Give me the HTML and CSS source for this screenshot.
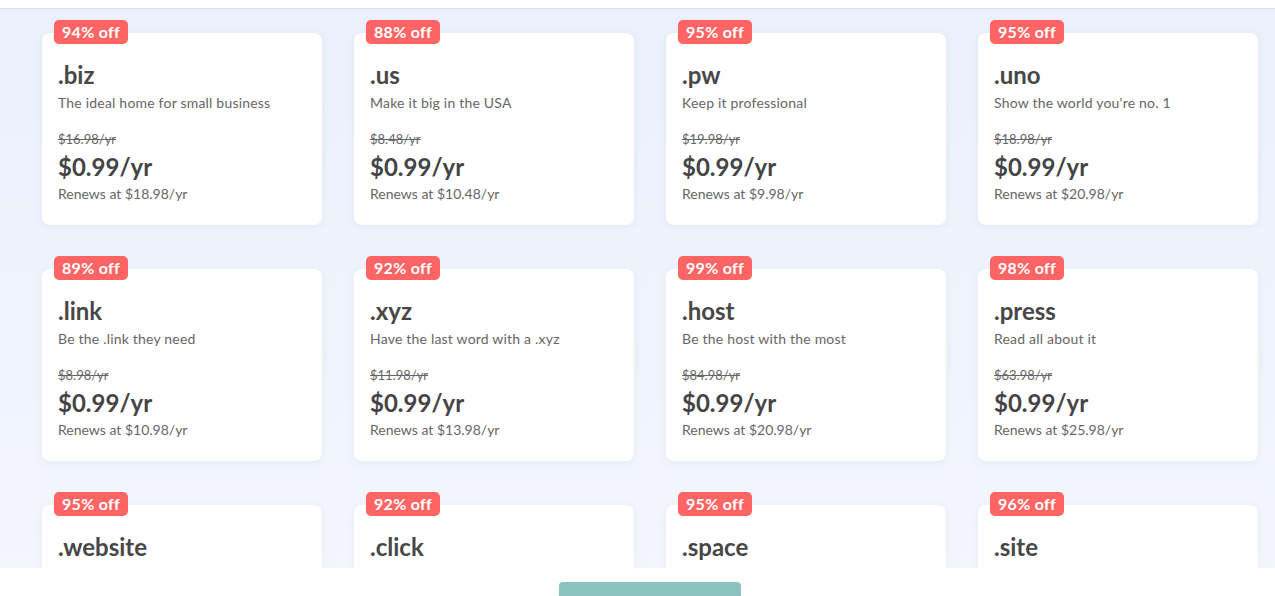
FILE: index.html
```html
<!DOCTYPE html>
<html lang="en">
<head>
<meta charset="utf-8">
<title>Domain deals</title>
<link rel="stylesheet" href="styles.css">
</head>
<body>
<div class="topbar"></div>
<section class="deals">
  <div class="grid">
    <div class="card"><span class="badge">94% off</span><h3 class="tld">.biz</h3><p class="desc">The ideal home for small business</p><p class="old">$16.98/yr</p><p class="price">$0.99/yr</p><p class="renew">Renews at $18.98/yr</p></div>
    <div class="card"><span class="badge">88% off</span><h3 class="tld">.us</h3><p class="desc">Make it big in the USA</p><p class="old">$8.48/yr</p><p class="price">$0.99/yr</p><p class="renew">Renews at $10.48/yr</p></div>
    <div class="card"><span class="badge">95% off</span><h3 class="tld">.pw</h3><p class="desc">Keep it professional</p><p class="old">$19.98/yr</p><p class="price">$0.99/yr</p><p class="renew">Renews at $9.98/yr</p></div>
    <div class="card"><span class="badge">95% off</span><h3 class="tld">.uno</h3><p class="desc">Show the world you're no. 1</p><p class="old">$18.98/yr</p><p class="price">$0.99/yr</p><p class="renew">Renews at $20.98/yr</p></div>
    <div class="card"><span class="badge">89% off</span><h3 class="tld">.link</h3><p class="desc">Be the .link they need</p><p class="old">$8.98/yr</p><p class="price">$0.99/yr</p><p class="renew">Renews at $10.98/yr</p></div>
    <div class="card"><span class="badge">92% off</span><h3 class="tld">.xyz</h3><p class="desc">Have the last word with a .xyz</p><p class="old">$11.98/yr</p><p class="price">$0.99/yr</p><p class="renew">Renews at $13.98/yr</p></div>
    <div class="card"><span class="badge">99% off</span><h3 class="tld">.host</h3><p class="desc">Be the host with the most</p><p class="old">$84.98/yr</p><p class="price">$0.99/yr</p><p class="renew">Renews at $20.98/yr</p></div>
    <div class="card"><span class="badge">98% off</span><h3 class="tld">.press</h3><p class="desc">Read all about it</p><p class="old">$63.98/yr</p><p class="price">$0.99/yr</p><p class="renew">Renews at $25.98/yr</p></div>
    <div class="card"><span class="badge">95% off</span><h3 class="tld">.website</h3></div>
    <div class="card"><span class="badge">92% off</span><h3 class="tld">.click</h3></div>
    <div class="card"><span class="badge">95% off</span><h3 class="tld">.space</h3></div>
    <div class="card"><span class="badge">96% off</span><h3 class="tld">.site</h3></div>
  </div>
</section>
<div class="more">
  <div class="more-btn"></div>
</div>
</body>
</html>
```
FILE: styles.css
```css
html, body {
  margin: 0;
  padding: 0;
  background: #ffffff;
  overflow: hidden;
  font-family: Lato, "Open Sans", sans-serif;
}

.topbar {
  height: 8px;
  background: #ffffff;
  border-bottom: 1px solid #d9dce3;
}

.deals {
  height: 559px;
  overflow: hidden;
  background: linear-gradient(180deg, #ebf0fb 0%, #f3f6fd 100%);
  padding: 24px 0 0 42px;
  box-sizing: border-box;
}

.grid {
  display: grid;
  grid-template-columns: repeat(4, 280px);
  column-gap: 32px;
  row-gap: 44px;
}

.card {
  position: relative;
  height: 192px;
  box-sizing: border-box;
  background: #ffffff;
  border-radius: 8px;
  box-shadow: 0 2px 10px rgba(40, 60, 110, 0.06);
  padding: 26px 16px 0 16px;
  color: #444444;
}

.badge {
  position: absolute;
  top: -13px;
  left: 12px;
  height: 24px;
  line-height: 24px;
  padding: 0 8px;
  border-radius: 5px;
  background: #ff6464;
  color: #ffffff;
  font-weight: 700;
  font-size: 16px;
  letter-spacing: 0.3px;
}

.tld {
  margin: 0;
  font-size: 24px;
  line-height: 32px;
  font-weight: 700;
  color: #474747;
}

.desc {
  margin: 2px 0 0;
  font-size: 14px;
  line-height: 20px;
  letter-spacing: 0.2px;
  color: #666666;
}

.old {
  margin: 16px 0 0;
  font-size: 13px;
  line-height: 20px;
  color: #666666;
  text-decoration: line-through;
}

.price {
  margin: 2px 0 0;
  font-size: 24px;
  line-height: 32px;
  font-weight: 700;
  color: #444444;
}

.renew {
  margin: 1px 0 0;
  font-size: 14px;
  line-height: 20px;
  color: #666666;
}

.more {
  display: flex;
  padding: 14px 0 0 559px;
}

.more-btn {
  width: 182px;
  height: 44px;
  border-radius: 4px;
  background: #8bc1bf;
}
```
